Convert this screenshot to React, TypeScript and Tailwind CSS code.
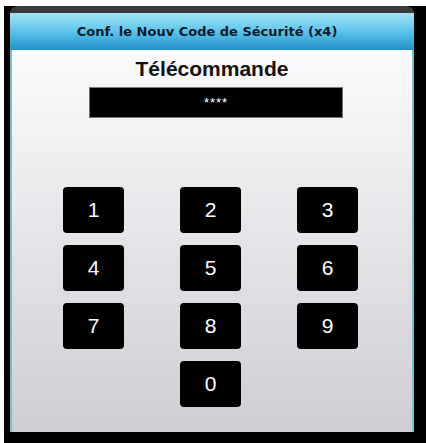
const keys = [
  ["1", "2", "3"],
  ["4", "5", "6"],
  ["7", "8", "9"],
  ["", "0", ""],
];

function Key({ label }: { label: string }) {
  if (!label) return <div className="w-[61px] h-[46px]" />;
  return (
    <div className="w-[61px] h-[46px] bg-black rounded-[4px] flex items-center justify-center text-white text-[21px] font-[family-name:Liberation_Sans,Arial,sans-serif]">
      {label}
    </div>
  );
}

export default function App() {
  return (
    <div className="w-[426px] h-[443px] bg-white overflow-hidden">
      <div className="ml-[4px] mt-[6px] w-[422px] h-[437px] bg-black pl-[6px] pr-[12px] pb-[11px] flex flex-col">
        {/* title bar */}
        <div className="rounded-t-[8px] overflow-hidden">
          <div className="h-[7px] bg-[#3b3b3d]" />
          <div className="h-[37px] pr-[10px] bg-gradient-to-b from-[#a2e4f8] via-[#5cc3ea] to-[#1f90cb] flex items-center justify-center">
            <span className="font-[family-name:DejaVu_Sans,Verdana,sans-serif] font-bold text-[13px] text-[#0b1a28]">
              Conf. le Nouv Code de Sécurité (x4)
            </span>
          </div>
        </div>
        {/* body */}
        <div className="flex-1 border-x-[2px] border-[#6fc3c8] bg-gradient-to-b from-[#fbfbfd] to-[#cfcdd2] flex flex-col items-center">
          <div className="mt-[5px] h-[28px] flex items-center text-[21px] font-bold text-[#111] font-[family-name:Liberation_Sans,Arial,sans-serif]">
            Télécommande
          </div>
          <div className="mt-[4px] ml-[8px] w-[254px] h-[31px] bg-black border border-[#777] flex items-center justify-center text-white text-[13px] font-[family-name:Liberation_Sans,Arial,sans-serif] tracking-[1px]">
            ****
          </div>
          <div className="mt-[69px] mr-[3px] grid grid-cols-3 gap-x-[56px] gap-y-[12px]">
            {keys.flat().map((k, i) => (
              <Key key={i} label={k} />
            ))}
          </div>
        </div>
      </div>
    </div>
  );
}
